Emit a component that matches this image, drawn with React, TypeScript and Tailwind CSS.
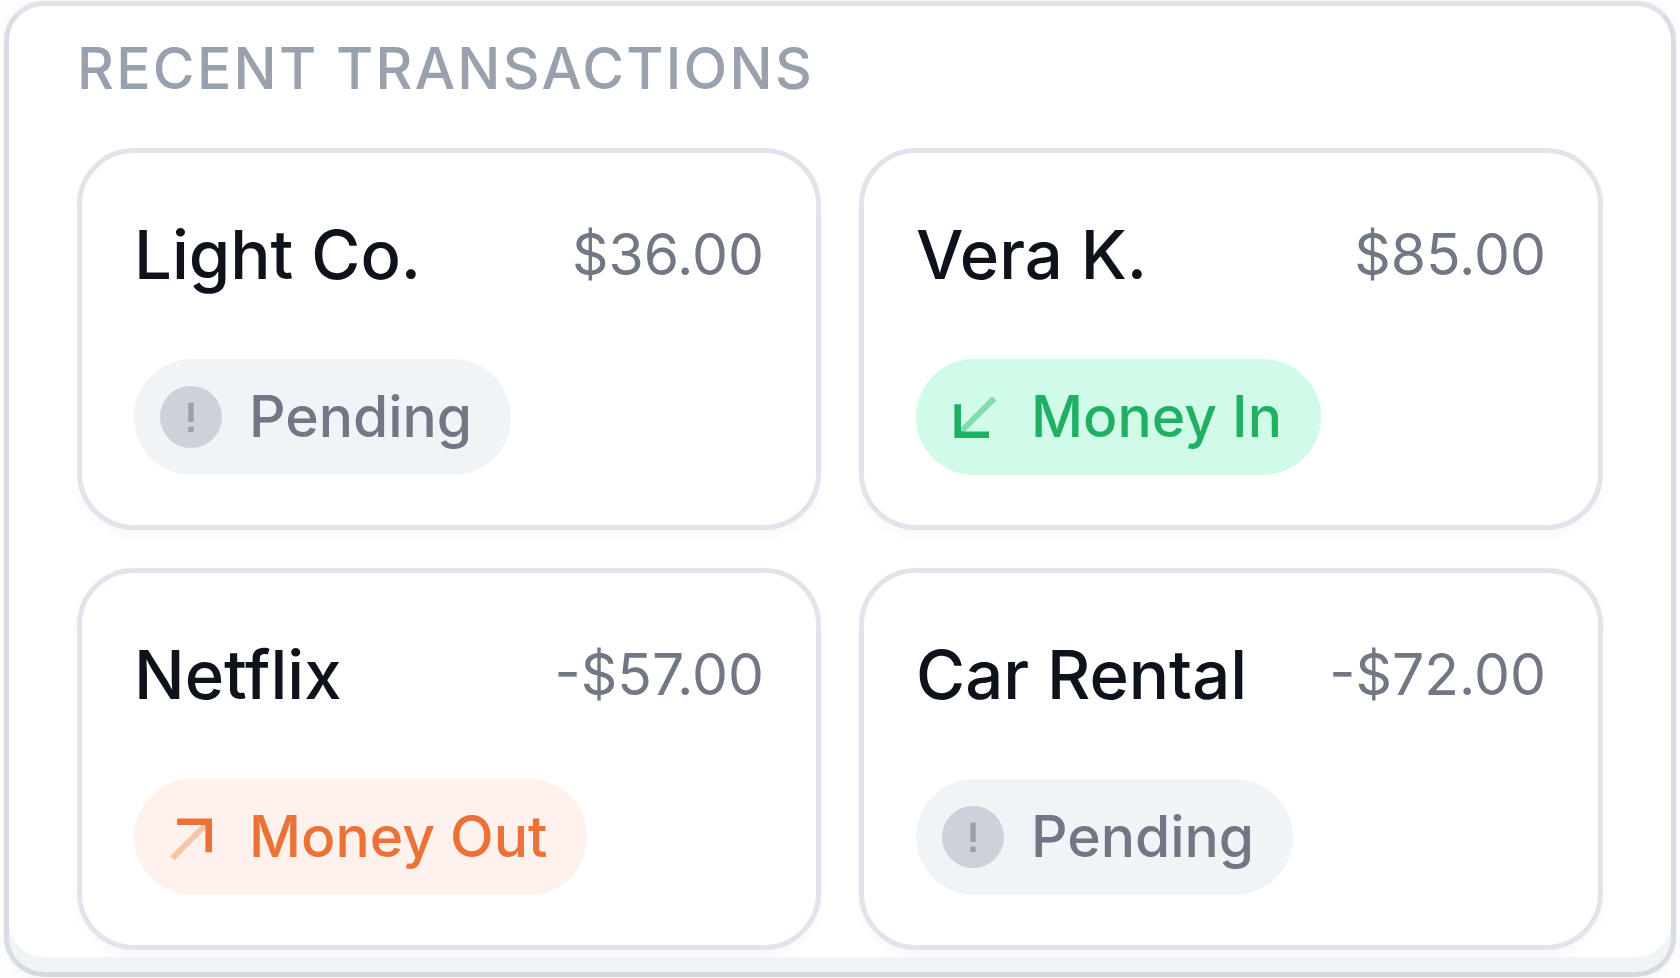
type Status = "pending" | "in" | "out";

const transactions: { name: string; amount: string; status: Status }[] = [
  { name: "Light Co.", amount: "$36.00", status: "pending" },
  { name: "Vera K.", amount: "$85.00", status: "in" },
  { name: "Netflix", amount: "-$57.00", status: "out" },
  { name: "Car Rental", amount: "-$72.00", status: "pending" },
];

function PendingIcon() {
  return (
    <svg viewBox="0 0 62 62" className="size-[62px] shrink-0" aria-hidden="true">
      <circle cx="31" cy="31" r="31" fill="#cdd1d9" />
      <rect x="28.3" y="16.7" width="5.4" height="19.3" fill="#99a0ae" />
      <rect x="28.3" y="40.7" width="5.4" height="5.3" fill="#99a0ae" />
    </svg>
  );
}

function MoneyInIcon() {
  return (
    <svg viewBox="0 0 62 62" className="size-[62px] shrink-0" aria-hidden="true">
      <path d="M18 46.5 52.2 12.3" stroke="#83dbb0" strokeWidth="6" />
      <path d="M12.4 18.2H19v27.2h28V52H12.4z" fill="#20b063" />
    </svg>
  );
}

function MoneyOutIcon() {
  return (
    <svg viewBox="0 0 62 62" className="size-[62px] shrink-0" aria-hidden="true">
      <path d="M46.5 18 12.3 52.2" stroke="#f9c3aa" strokeWidth="6" />
      <path d="M17.2 12.4H52v33.8h-6.6V19H17.2z" fill="#eb7136" />
    </svg>
  );
}

const badges = {
  pending: { label: "Pending", icon: PendingIcon, className: "bg-[#f0f4f7] text-[#717784]" },
  in: { label: "Money In", icon: MoneyInIcon, className: "bg-[#d0fbe9] text-[#20b063]" },
  out: { label: "Money Out", icon: MoneyOutIcon, className: "bg-[#fff1ec] text-[#eb7136]" },
};

function Badge({ status }: { status: Status }) {
  const badge = badges[status];
  return (
    <span
      className={`inline-flex h-[116px] items-center gap-[27px] rounded-full pr-[39px] pl-[26px] text-[57px] leading-[76px] font-medium whitespace-nowrap ${badge.className}`}
    >
      <badge.icon />
      {badge.label}
    </span>
  );
}

export default function App() {
  return (
    <div className="min-h-screen bg-[#fdfdfd] px-1 pt-px pb-px font-['Inter',sans-serif]">
      <section className="rounded-[40px] border-[5px] border-[#d9dce2] border-t-[#e0e3ea] border-b-[#d6dade] bg-[#f0f4f7] pb-[15px] shadow-[0_2px_8px_rgba(14,18,27,0.04)]">
        <div className="rounded-[35px] bg-white px-[68px] pt-[25px] pb-[7px]">
          <h2 className="mb-[41px] text-[57px] leading-[76px] font-medium tracking-[0.04em] text-[#99a0ae] uppercase">
            Recent Transactions
          </h2>
          <ul className="grid grid-cols-2 gap-[38px]">
            {transactions.map((t) => (
              <li
                key={t.name}
                className="rounded-[57px] border-[5px] border-[#e1e4ea] bg-white px-[52px] pt-[52px] pb-[50px] shadow-[0_5px_10px_rgba(14,18,27,0.03)]"
              >
                <div className="mb-[54px] flex items-center justify-between leading-[100px] whitespace-nowrap">
                  <h3 className="text-[67px] font-medium text-[#0e121b]">{t.name}</h3>
                  <p className="text-[57px] text-[#717784]">{t.amount}</p>
                </div>
                <div className="flex">
                  <Badge status={t.status} />
                </div>
              </li>
            ))}
          </ul>
        </div>
      </section>
    </div>
  );
}
